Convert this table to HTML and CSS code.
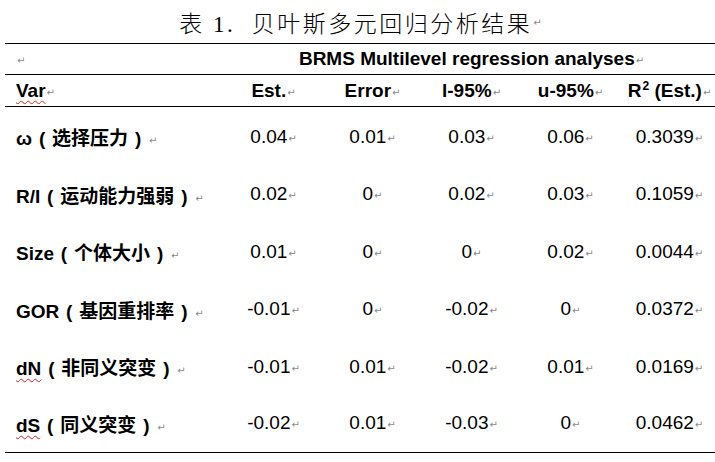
FILE: index.html
```html
<!DOCTYPE html>
<html lang="zh">
<head>
<meta charset="utf-8">
<title>表 1. 贝叶斯多元回归分析结果</title>
<link rel="stylesheet" href="styles.css">
</head>
<body>
<div class="title">表 1.&nbsp; 贝叶斯多元回归分析结果<i class="m">↵</i></div>
<div class="table">
  <div class="row group">
    <div class="cell label"><i class="m">↵</i></div>
    <div class="cell span"><b>BRMS Multilevel regression analyses</b><i class="m">↵</i></div>
  </div>
  <div class="row head">
    <div class="cell label"><b class="sq">Var</b><i class="m">↵</i></div>
    <div class="cell"><b>Est.</b><i class="m">↵</i></div>
    <div class="cell"><b>Error</b><i class="m">↵</i></div>
    <div class="cell"><b>l-95%</b><i class="m">↵</i></div>
    <div class="cell"><b>u-95%</b><i class="m">↵</i></div>
    <div class="cell"><b>R<sup>2</sup> (Est.)</b><i class="m">↵</i></div>
  </div>
  <div class="row data">
    <div class="cell label"><b>ω<span class="pa">(</span>选择压力<span class="pa">)</span></b><i class="m">↵</i></div>
    <div class="cell">0.04<i class="m">↵</i></div>
    <div class="cell">0.01<i class="m">↵</i></div>
    <div class="cell">0.03<i class="m">↵</i></div>
    <div class="cell">0.06<i class="m">↵</i></div>
    <div class="cell">0.3039<i class="m">↵</i></div>
  </div>
  <div class="row data">
    <div class="cell label"><b>R/I<span class="pa">(</span>运动能力强弱<span class="pa">)</span></b><i class="m">↵</i></div>
    <div class="cell">0.02<i class="m">↵</i></div>
    <div class="cell">0<i class="m">↵</i></div>
    <div class="cell">0.02<i class="m">↵</i></div>
    <div class="cell">0.03<i class="m">↵</i></div>
    <div class="cell">0.1059<i class="m">↵</i></div>
  </div>
  <div class="row data">
    <div class="cell label"><b>Size<span class="pa">(</span>个体大小<span class="pa">)</span></b><i class="m">↵</i></div>
    <div class="cell">0.01<i class="m">↵</i></div>
    <div class="cell">0<i class="m">↵</i></div>
    <div class="cell">0<i class="m">↵</i></div>
    <div class="cell">0.02<i class="m">↵</i></div>
    <div class="cell">0.0044<i class="m">↵</i></div>
  </div>
  <div class="row data">
    <div class="cell label"><b>GOR<span class="pa">(</span>基因重排率<span class="pa">)</span></b><i class="m">↵</i></div>
    <div class="cell">-0.01<i class="m">↵</i></div>
    <div class="cell">0<i class="m">↵</i></div>
    <div class="cell">-0.02<i class="m">↵</i></div>
    <div class="cell">0<i class="m">↵</i></div>
    <div class="cell">0.0372<i class="m">↵</i></div>
  </div>
  <div class="row data">
    <div class="cell label"><b><span class="sq">dN</span><span class="pa">(</span>非同义突变<span class="pa">)</span></b><i class="m">↵</i></div>
    <div class="cell">-0.01<i class="m">↵</i></div>
    <div class="cell">0.01<i class="m">↵</i></div>
    <div class="cell">-0.02<i class="m">↵</i></div>
    <div class="cell">0.01<i class="m">↵</i></div>
    <div class="cell">0.0169<i class="m">↵</i></div>
  </div>
  <div class="row data last">
    <div class="cell label"><b><span class="sq">dS</span><span class="pa">(</span>同义突变<span class="pa">)</span></b><i class="m">↵</i></div>
    <div class="cell">-0.02<i class="m">↵</i></div>
    <div class="cell">0.01<i class="m">↵</i></div>
    <div class="cell">-0.03<i class="m">↵</i></div>
    <div class="cell">0<i class="m">↵</i></div>
    <div class="cell">0.0462<i class="m">↵</i></div>
  </div>
</div>
</body>
</html>
```

FILE: styles.css
```css
html, body {
  margin: 0;
  padding: 0;
  background: #ffffff;
  overflow: hidden;
}

body {
  font-family: "Liberation Sans", Arial, "Noto Sans CJK SC", sans-serif;
  color: #000000;
  width: 715px;
}

.title {
  height: 43px;
  display: flex;
  align-items: center;
  justify-content: center;
  font-family: "Liberation Serif", "Noto Sans CJK SC", serif;
  font-size: 23px;
  font-weight: 300;
  letter-spacing: 2.5px;
  padding-left: 6px;
  padding-top: 1px;
  box-sizing: border-box;
}

.m {
  font-style: normal;
  font-weight: 400;
  font-family: "DejaVu Sans", sans-serif;
  font-size: 10px;
  color: #8a8a8a;
  letter-spacing: 0;
  margin-left: 1px;
  vertical-align: 1px;
}

.title .m {
  font-size: 10px;
  vertical-align: -1px;
}

.table {
  margin-left: 5px;
  width: 715px;
  font-size: 19px;
}

.row {
  display: grid;
  grid-template-columns: 219px repeat(5, 99px);
  align-items: center;
  box-sizing: border-box;
}

.cell {
  text-align: center;
  white-space: nowrap;
}

.cell.label {
  text-align: left;
  padding-left: 11px;
}

.cell.span {
  grid-column: 2 / 7;
}

.group {
  height: 32px;
  border-top: 1px solid #000000;
  border-bottom: 1px solid #000000;
}

.head {
  height: 32px;
  border-bottom: 1px solid #000000;
}

.data {
  height: 57.5px;
  padding-top: 2px;
}

.data.last {
  height: 58.5px;
  border-bottom: 1px solid #000000;
  padding-top: 0;
}

.pa {
  display: inline-block;
  width: 20px;
  text-align: center;
}

.sq {
  text-decoration: underline wavy #e02020;
  text-decoration-thickness: 1px;
  text-underline-offset: 3px;
}

sup {
  font-size: 12px;
  vertical-align: 7px;
  line-height: 0;
  margin-left: 1px;
}
```
